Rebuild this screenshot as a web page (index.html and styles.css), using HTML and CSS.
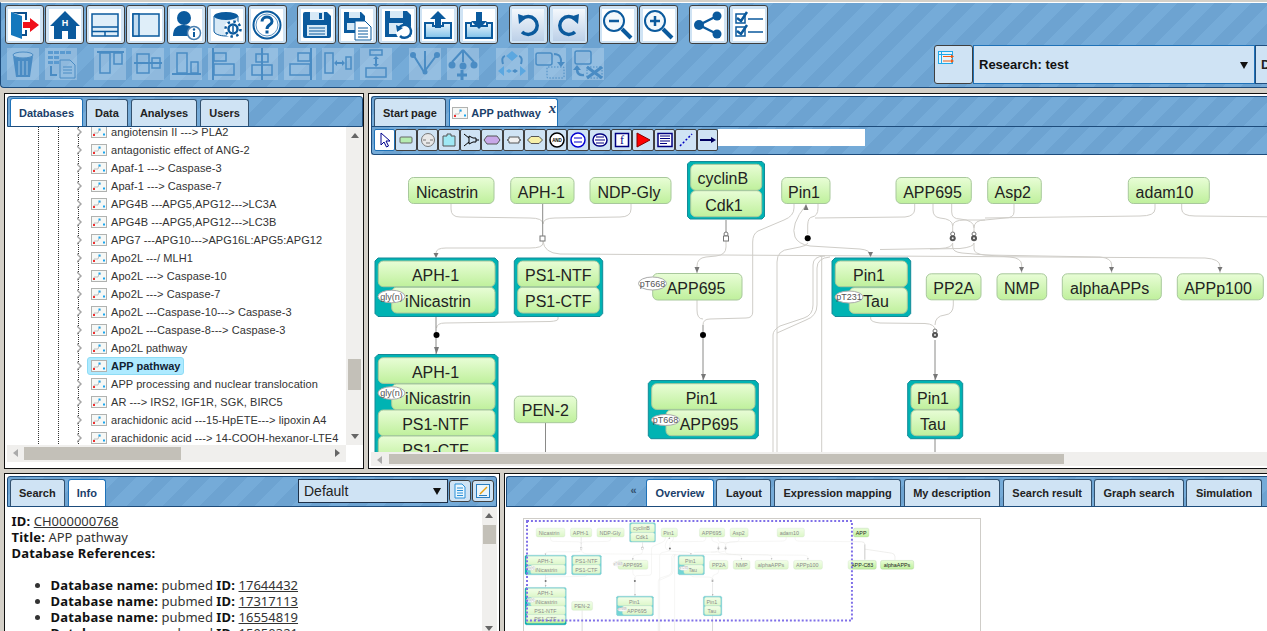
FILE: index.html
```html
<!DOCTYPE html>
<html lang="en">
<head>
<meta charset="utf-8">
<title>APP pathway</title>
<link rel="stylesheet" href="styles.css">
</head>
<body>
<svg class="defs" width="0" height="0" aria-hidden="true">
  <defs>
    <linearGradient id="ng" x1="0" y1="0" x2="0" y2="1"><stop offset="0" stop-color="#e8fdd6"/><stop offset="1" stop-color="#bff09c"/></linearGradient>
    <symbol id="pw" viewBox="0 0 16 12">
      <rect x=".5" y=".5" width="15" height="11" fill="#f6f8f6" stroke="#b0b2b0"/>
      <path d="M3 8 L3 7 H7 L8 4 H10" fill="none" stroke="#aaa" stroke-width=".7"/>
      <rect x="2" y="8" width="2" height="2" fill="#f03030"/>
      <rect x="7.500" y="2.500" width="2" height="2" fill="#19a5ef"/>
      <rect x="12" y="7.500" width="2" height="2" fill="#19a5ef"/>
    </symbol>
    <g id="graph">
      <g class="edge">
        <path d="M451 204V209Q451 217 460 217L530 218Q543 218 543 224"/>
        <path d="M631 204V209Q631 217 620 217L555 218Q543 218 543 224"/>
        <path d="M543 241V243Q543 248 530 248L446 248Q436 248 436 253"/>
        <path d="M543 241Q544 253 560 254L1205 258Q1220 259 1220 266V273"/>
        <path d="M726 241V247Q726 255 716 256L706 257Q697 258 697 266V273"/>
        <path d="M697 300V310Q697 319 703 319"/>
        <path d="M752.700 242V312Q752.700 318 746 318L710 319Q703 319 703 325"/>
        <path d="M558 317V319Q558 321 550 321.500L445 323Q437 323 436.500 328"/>
        <path d="M794 204V208Q794 216 784 220L758 231Q752.700 234 752.700 242"/>
        <path d="M777 500V262Q777 250 790 249L800 247Q806 246 808 243"/>
        <path d="M773 500V335Q773 330 780 326L804 318Q813 315 813 305V265Q813 256 825 256"/>
        <path d="M777 333L806 320Q817 316 817 305V268Q817 258 830 257"/>
        <path d="M821.700 256V500"/>
        <path d="M806 205Q790 225 795 237Q798 244 810 246L860 249Q871 250 871 256"/>
        <path d="M818 204V208Q818 216 812 217Q808 217.500 807.700 225V234"/>
        <path d="M952.700 243Q952 248 940 248.500L880 249.500"/>
        <path d="M974 243Q974 247 960 248.500L930 249"/>
        <path d="M914.700 204V209Q914.700 216 905 217L815 218"/>
        <path d="M933 204V210Q933 217 940 218Q952.700 219 952.700 226V233"/>
        <path d="M951.700 204V212Q951.700 219 960 219Q974 220 974 228V233"/>
        <path d="M1014 204V212Q1014 218 1005 218L985 220Q974 220 974 228"/>
        <path d="M985 220L965 220Q952.700 220 952.700 226"/>
        <path d="M1155 204V209Q1155 216 1140 216L985 218"/>
        <path d="M1181.700 204V209Q1181.700 216 1195 216L1380 218Q1390 218 1390 226V270"/>
        <path d="M952.700 243V247Q952.700 252 962 253L1010 257Q1021.700 258 1021.700 265V273"/>
        <path d="M974 243V249Q974 254 985 255L1100 257Q1111.700 258 1111.700 265V273"/>
        <path d="M870.700 317V319Q871 322 880 323L925 323.500Q935 324 935 330"/>
        <path d="M953.300 300V305Q953.300 314 945 315Q935 316 935 325"/>
        <path d="M1390 240L1470 252Q1480 254 1480 262V272"/>
      </g>
      <g class="edge-d">
        <path d="M542.700 204V236"/>
        <path d="M726 220V235"/>
        <path d="M436 317V354"/>
        <path d="M703 325V380"/>
        <path d="M935 340V380"/>
        <path d="M935 439V520"/>
        <path d="M545.500 423V520"/>
        <path d="M1390 226V272"/>
      </g>
      <g class="arrow">
        <path d="M433.500 253h5l-2.500 5z"/>
        <path d="M694.500 267h5l-2.500 6z"/>
        <path d="M434 347h5l-2.500 7z"/>
        <path d="M701 374h5l-2.500 6z"/>
        <path d="M933 374h5l-2.500 6z"/>
        <path d="M803.500 210h5l-2.500-6z"/>
        <path d="M868 252h5l-2.500 5z"/>
        <path d="M1019 267h5l-2.500 5z"/>
        <path d="M1109 267h5l-2.500 5z"/>
        <path d="M1217.500 267h5l-2.500 5z"/>
      </g>
      <rect class="sq" x="540" y="236" width="5" height="5"/>
      <circle class="sq" cx="726" cy="234" r="2"/>
      <rect class="sq" x="723.500" y="236" width="5" height="5"/>
      <circle class="dot" cx="436.500" cy="335" r="3"/>
      <circle class="dot" cx="703" cy="335" r="3"/>
      <circle class="dot" cx="807.700" cy="238.300" r="3"/>
      <circle class="sq" cx="952.700" cy="234" r="2"/><circle class="gdot" cx="952.700" cy="238.300" r="3"/><circle class="wdot" cx="952.700" cy="238.300" r="1"/>
      <circle class="sq" cx="974" cy="234" r="2"/><circle class="gdot" cx="974" cy="238.300" r="3"/><circle class="wdot" cx="974" cy="238.300" r="1"/>
      <circle class="sq" cx="935" cy="331" r="2"/><circle class="gdot" cx="935" cy="335" r="3"/><circle class="wdot" cx="935" cy="335" r="1"/>

      <rect class="node" x="408.500" y="177.500" width="85.500" height="26" rx="5"/><text class="nt" x="447" y="197.500">Nicastrin</text>
      <rect class="node" x="510.700" y="177.500" width="63.300" height="26" rx="5"/><text class="nt" x="541.300" y="197.500">APH-1</text>
      <rect class="node" x="590" y="177.500" width="81" height="26" rx="5"/><text class="nt" x="629" y="197.500">NDP-Gly</text>
      <rect class="node" x="781.700" y="177.500" width="48.300" height="26" rx="5"/><text class="nt" x="804" y="197.500">Pin1</text>
      <rect class="node" x="896" y="177.500" width="75.300" height="26" rx="5"/><text class="nt" x="932.500" y="197.500">APP695</text>
      <rect class="node" x="987.700" y="177.500" width="53.600" height="26" rx="5"/><text class="nt" x="1012.700" y="197.500">Asp2</text>
      <rect class="node" x="1128.300" y="177.500" width="81" height="26" rx="5"/><text class="nt" x="1164.500" y="197.500">adam10</text>

      <rect class="node" x="926.300" y="273.800" width="54.700" height="26" rx="5"/><text class="nt" x="953.700" y="294">PP2A</text>
      <rect class="node" x="997" y="273.800" width="49.700" height="26" rx="5"/><text class="nt" x="1021.800" y="294">NMP</text>
      <rect class="node" x="1062.300" y="273.800" width="99" height="26" rx="5"/><text class="nt" x="1109.700" y="294">alphaAPPs</text>
      <rect class="node" x="1177.300" y="273.800" width="86" height="26" rx="5"/><text class="nt" x="1218" y="294">APPp100</text>

      <rect class="node" x="652.700" y="273.500" width="89.300" height="26.500" rx="5"/><text class="nt" x="696" y="294">APP695</text>
      <ellipse class="mod" cx="652.500" cy="283.500" rx="14" ry="6.500"/><text class="mt" x="652.500" y="286.500">pT668</text>

      <rect class="node" x="514.300" y="396.200" width="62.400" height="26.500" rx="5"/><text class="nt" x="545.300" y="416">PEN-2</text>

      <path class="cx" d="M690 161.500H762L764.500 164V216.500L762 219H690L687.500 216.500V164Z"/>
      <rect class="node" x="690.700" y="164.300" width="71" height="26" rx="5"/><text class="nt" x="722.800" y="184">cyclinB</text>
      <rect class="node" x="690.700" y="190.700" width="71" height="26" rx="5"/><text class="nt" x="724" y="210.500">Cdk1</text>

      <path class="cx" d="M378 258H495L498 261V313.500L495 316.500H378L375 313.500V261Z"/>
      <rect class="node" x="378.300" y="261" width="116.700" height="25.700" rx="5"/><text class="nt" x="435.500" y="281">APH-1</text>
      <rect class="node" x="391.700" y="287.300" width="103.300" height="25.700" rx="5"/><text class="nt" x="438" y="307">iNicastrin</text>
      <ellipse class="mod" cx="391.500" cy="296.500" rx="13.500" ry="6.300"/><text class="mt" x="391.500" y="299.500">gly(n)</text>

      <path class="cx" d="M517 258H600L602.700 261V313.500L600 316.500H517L514.300 313.500V261Z"/>
      <rect class="node" x="517.700" y="261" width="81.600" height="25.700" rx="5"/><text class="nt" x="558.300" y="281">PS1-NTF</text>
      <rect class="node" x="517.700" y="287.300" width="81.600" height="25.700" rx="5"/><text class="nt" x="558.300" y="307">PS1-CTF</text>

      <path class="cx" d="M835 258H908L910.700 261V313.500L908 316.500H835L832 313.500V261Z"/>
      <rect class="node" x="835.300" y="261" width="72" height="25.700" rx="5"/><text class="nt" x="869" y="281">Pin1</text>
      <rect class="node" x="849.300" y="287.700" width="58" height="25.700" rx="5"/><text class="nt" x="876" y="307">Tau</text>
      <ellipse class="mod" cx="849" cy="297" rx="14" ry="6"/><text class="mt" x="849" y="300">pT231</text>

      <path class="cx" d="M378 354.500H495L498 357.500V463L495 466H378L375 463V357.500Z"/>
      <rect class="node" x="378.300" y="357.700" width="116.700" height="25.700" rx="5"/><text class="nt" x="435.500" y="377.500">APH-1</text>
      <rect class="node" x="391.700" y="384" width="103.300" height="25.700" rx="5"/><text class="nt" x="438" y="403.500">iNicastrin</text>
      <ellipse class="mod" cx="391.500" cy="393" rx="13.500" ry="6.300"/><text class="mt" x="391.500" y="396">gly(n)</text>
      <rect class="node" x="378.300" y="410" width="116.700" height="25.700" rx="5"/><text class="nt" x="435.500" y="429.500">PS1-NTF</text>
      <rect class="node" x="378.300" y="436" width="116.700" height="25.700" rx="5"/><text class="nt" x="435.500" y="456">PS1-CTF</text>

      <path class="cx" d="M651 380.500H755.500L758.300 383.500V436L755.500 438.700H651L648.300 436V383.500Z"/>
      <rect class="node" x="651.700" y="383.700" width="103.300" height="25.700" rx="5"/><text class="nt" x="701.700" y="403.500">Pin1</text>
      <rect class="node" x="666" y="410" width="89" height="25.700" rx="5"/><text class="nt" x="709" y="429.500">APP695</text>
      <ellipse class="mod" cx="665.500" cy="420" rx="14" ry="5.500"/><text class="mt" x="665.500" y="423">pT668</text>

      <path class="cx" d="M910.500 380.500H960L962.700 383.500V436L960 438.700H910.500L907.700 436V383.500Z"/>
      <rect class="node" x="911" y="383.700" width="48.300" height="25.700" rx="5"/><text class="nt" x="933" y="403.500">Pin1</text>
      <rect class="node" x="911" y="410" width="48.300" height="25.700" rx="5"/><text class="nt" x="933" y="429.500">Tau</text>

      <rect class="node" x="1356" y="177.500" width="46" height="26" rx="5"/><text class="nt" x="1379" y="197.500">APP</text>
      <rect class="node" x="1340" y="273.800" width="84" height="26" rx="5"/><text class="nt" x="1382" y="294">APP-C83</text>
      <rect class="node" x="1437" y="273.800" width="99" height="26" rx="5"/><text class="nt" x="1486" y="294">alphaAPPs</text>
    </g>
  </defs>
</svg>

<div class="app">
  <header class="toolbar">
    <div class="tool-left">
      <div class="tool-row">
        <div class="group">
          <button class="tb"><svg viewBox="0 0 32 32"><path fill="#1578bd" d="M3 3 14 7V30L3 26Z"/><path fill="#0b4f8c" d="M3 3H19V11H17V5H10ZM17 21H19V27H14V25H17Z"/><path fill="#f0101a" d="M15 13H22V9L31 16 22 23V19H15Z"/></svg></button>
          <button class="tb"><svg viewBox="0 0 32 32"><path fill="#0b5a9d" d="M16 2 31 17H27V30H19V22H13V30H5V17H1Z"/><path fill="#fff" d="M13 23H19V30H13Z" opacity=".85"/><text class="hh" x="16" y="17">H</text></svg></button>
          <button class="tb"><svg viewBox="0 0 32 32"><rect x="3" y="5" width="26" height="22" fill="#dfeef9" stroke="#0b5a9d" stroke-width="1.500"/><path stroke="#0b5a9d" stroke-width="1.500" d="M3 18H29M3 22.500H29M16 22.500V27"/></svg></button>
          <button class="tb"><svg viewBox="0 0 32 32"><rect x="3" y="5" width="26" height="22" fill="#dfeef9" stroke="#0b5a9d" stroke-width="1.500"/><rect x="3" y="5" width="6" height="22" fill="#c3dcf0" stroke="#0b5a9d" stroke-width="1.500"/></svg></button>
          <button class="tb"><svg viewBox="0 0 32 32"><circle cx="14" cy="9" r="7" fill="#0b5a9d"/><path fill="#0b5a9d" d="M3 27C3 18 8 16 14 16S24 19 24 27Z"/><circle cx="24" cy="24" r="6.500" fill="#fff" stroke="#4a7fb0" stroke-width="1.500"/><path stroke="#0b5a9d" stroke-width="2" d="M24 23V28"/><circle cx="24" cy="20.500" r="1.200" fill="#0b5a9d"/></svg></button>
          <button class="tb"><svg viewBox="0 0 32 32"><path fill="#d7e9f6" stroke="#0b5a9d" d="M3 7V22C3 25 9 27 15 27 21 27 27 25 27 22V7Z"/><ellipse cx="15" cy="7" rx="12" ry="4" fill="#0b5a9d"/><circle cx="22" cy="20" r="9" fill="#fff"/><circle cx="22" cy="20" r="4.500" fill="#fff" stroke="#0b5a9d" stroke-width="2.500"/><circle cx="22" cy="20" r="7.500" fill="none" stroke="#0b5a9d" stroke-width="2.500" stroke-dasharray="2.500 3.400"/><path stroke="#0b5a9d" stroke-width="1.500" d="M22 17V23"/></svg></button>
          <button class="tb"><svg viewBox="0 0 32 32"><circle cx="16" cy="16" r="13.500" fill="#fff" stroke="#0b5a9d" stroke-width="2"/><circle cx="16" cy="16" r="11" fill="none" stroke="#5b93c3"/><path fill="none" stroke="#0b5a9d" stroke-width="3" d="M11 12.500C11 6.500 21 6.500 21 12.500 21 16 16 15.500 16 20"/><rect x="14.500" y="21.500" width="3" height="3" fill="#0b5a9d"/></svg></button>
        </div>
        <div class="group">
          <button class="tb"><svg viewBox="0 0 32 32"><path fill="#0b5a9d" d="M4 3H26L30 7V27Q30 29 28 29H4Q2 29 2 27V5Q2 3 4 3Z"/><rect x="9" y="3" width="14" height="8" fill="#d7e9f6"/><rect x="18" y="4" width="3" height="6" fill="#0b5a9d"/><rect x="6" y="16" width="20" height="11" fill="#d7e9f6"/><path stroke="#0b5a9d" d="M8 19H24M8 22H24M8 25H24"/></svg></button>
          <button class="tb"><svg viewBox="0 0 32 32"><path fill="#0b5a9d" d="M3 3H20L24 7V24H3Z"/><rect x="8" y="3" width="11" height="6" fill="#d7e9f6"/><rect x="6" y="14" width="12" height="7" fill="#d7e9f6"/><path fill="#fff" stroke="#0b5a9d" d="M14 12H24L30 18V31H14Z"/><path stroke="#0b5a9d" d="M17 19H27M17 22H27M17 25H27M17 28H27"/></svg></button>
          <button class="tb"><svg viewBox="0 0 32 32"><path fill="#0b5a9d" d="M3 2H25L29 6V28H3Z"/><rect x="8" y="2" width="13" height="7" fill="#d7e9f6"/><rect x="7" y="14" width="14" height="11" fill="#d7e9f6"/><circle cx="22" cy="23" r="8" fill="#fff"/><path fill="none" stroke="#0b5a9d" stroke-width="2.500" d="M17 19A6.500 6.500 0 1 1 18 27"/><path fill="#0b5a9d" d="M14 16 21 19 15 23Z"/></svg></button>
          <button class="tb"><svg viewBox="0 0 32 32"><defs><linearGradient id="bx" x1="0" y1="0" x2="0" y2="1"><stop offset="0" stop-color="#eaf5fc"/><stop offset="1" stop-color="#7fc2ea"/></linearGradient></defs><path fill="url(#bx)" stroke="#0b5a9d" stroke-width="2" d="M3 14V29H29V14H21V17H11V14Z"/><path fill="#0b5a9d" d="M16 2 24 10H19V19H13V10H8Z"/></svg></button>
          <button class="tb"><svg viewBox="0 0 32 32"><path fill="url(#bx)" stroke="#0b5a9d" stroke-width="2" d="M3 14V29H29V14H24V17H8V14Z"/><path fill="#0b5a9d" d="M16 20 24 12H19V3H13V12H8Z"/></svg></button>
        </div>
        <div class="group">
          <button class="tb soft"><svg viewBox="0 0 32 32"><path fill="none" stroke="#0b5a9d" stroke-width="3.500" d="M10 10A9 9 0 1 1 10 23"/><path fill="#0b5a9d" d="M6 5 15 8 7 15Z"/></svg></button>
          <button class="tb soft"><svg viewBox="0 0 32 32"><path fill="none" stroke="#0b5a9d" stroke-width="3.500" d="M22 10A9 9 0 1 0 22 23"/><path fill="#0b5a9d" d="M26 5 17 8 25 15Z"/></svg></button>
        </div>
        <div class="group">
          <button class="tb"><svg viewBox="0 0 32 32"><circle cx="12" cy="12" r="10" fill="#f2f8fc" stroke="#0b5a9d" stroke-width="2"/><path stroke="#0b5a9d" stroke-width="2.500" d="M7 12H17"/><path stroke="#0b5a9d" stroke-width="4" d="M20 20 29 29"/></svg></button>
          <button class="tb"><svg viewBox="0 0 32 32"><circle cx="12" cy="12" r="10" fill="#f2f8fc" stroke="#0b5a9d" stroke-width="2"/><path stroke="#0b5a9d" stroke-width="2.500" d="M7 12H17M12 7V17"/><path stroke="#0b5a9d" stroke-width="4" d="M20 20 29 29"/></svg></button>
        </div>
        <div class="group">
          <button class="tb"><svg viewBox="0 0 32 32"><path stroke="#0b5a9d" stroke-width="2.500" d="M7 16 25 7M7 16 25 25"/><circle cx="7" cy="16" r="5" fill="#0b5a9d"/><circle cx="25" cy="7" r="4.500" fill="#0b5a9d"/><circle cx="25" cy="25" r="4.500" fill="#0b5a9d"/></svg></button>
          <button class="tb"><svg viewBox="0 0 32 32"><rect x="3" y="5" width="9" height="9" fill="#fff" stroke="#0b5a9d" stroke-width="1.500"/><rect x="3" y="18" width="9" height="9" fill="#fff" stroke="#0b5a9d" stroke-width="1.500"/><path fill="none" stroke="#0b5a9d" stroke-width="2.500" d="M4 9 8 12 14 3M4 22 8 25 14 16"/><path stroke="#0b5a9d" stroke-width="1.500" d="M15 10H30M15 23H30"/></svg></button>
        </div>
      </div>
      <div class="tool-row faded">
        <div class="fgroup">
          <span class="ft"><svg viewBox="0 0 32 32"><ellipse cx="16" cy="7" rx="10" ry="3" fill="#9bc2e2" stroke="#4a8cc4"/><path fill="#4a8cc4" d="M6 8 9 29H23L26 8 C22 11 10 11 6 8Z"/><path stroke="#9bc2e2" d="M12 13V27M16 13V27M20 13V27"/></svg></span>
          <span class="ft"><svg viewBox="0 0 32 32"><path fill="#5a9ad0" d="M3 3h5v3H3zM9 3h5v3H9zM15 3h5v3h-5zM21 3h5v3h-5zM3 8h5v3H3zM9 8h5v3H9zM3 13h5v3H3zM9 13h5v3H9z"/><path fill="none" stroke="#4a8cc4" d="M15 12H25L30 17V30H15Z"/><path stroke="#4a8cc4" d="M18 19H27M18 22H27M18 25H27"/><path fill="none" stroke="#4a8cc4" stroke-width="2" d="M6 18V27H12"/></svg></span>
        </div>
        <div class="fgroup">
          <span class="ft"><svg viewBox="0 0 32 32"><path stroke="#4a8cc4" stroke-width="2" d="M3 4H30"/><rect x="6" y="5" width="10" height="20" fill="none" stroke="#4a8cc4" stroke-width="1.500"/><rect x="20" y="5" width="8" height="11" fill="none" stroke="#4a8cc4" stroke-width="1.500"/></svg></span>
          <span class="ft"><svg viewBox="0 0 32 32"><path stroke="#4a8cc4" stroke-width="2" d="M2 15H30"/><rect x="5" y="6" width="12" height="19" fill="none" stroke="#4a8cc4" stroke-width="1.500"/><rect x="20" y="10" width="8" height="10" fill="none" stroke="#4a8cc4" stroke-width="1.500"/></svg></span>
          <span class="ft"><svg viewBox="0 0 32 32"><path stroke="#4a8cc4" stroke-width="2" d="M2 26H31"/><rect x="7" y="5" width="10" height="20" fill="none" stroke="#4a8cc4" stroke-width="1.500"/><rect x="21" y="14" width="7" height="11" fill="none" stroke="#4a8cc4" stroke-width="1.500"/></svg></span>
          <span class="ft"><svg viewBox="0 0 32 32"><path stroke="#4a8cc4" stroke-width="2" d="M5 0V32"/><rect x="6" y="5" width="12" height="8" fill="none" stroke="#4a8cc4" stroke-width="1.500"/><rect x="6" y="16" width="20" height="11" fill="none" stroke="#4a8cc4" stroke-width="1.500"/></svg></span>
          <span class="ft"><svg viewBox="0 0 32 32"><path stroke="#4a8cc4" stroke-width="2" d="M16 0V32"/><rect x="10" y="6" width="12" height="8" fill="none" stroke="#4a8cc4" stroke-width="1.500"/><rect x="6" y="17" width="20" height="10" fill="none" stroke="#4a8cc4" stroke-width="1.500"/></svg></span>
          <span class="ft"><svg viewBox="0 0 32 32"><path stroke="#4a8cc4" stroke-width="2" d="M27 0V32"/><rect x="14" y="5" width="12" height="8" fill="none" stroke="#4a8cc4" stroke-width="1.500"/><rect x="6" y="16" width="20" height="11" fill="none" stroke="#4a8cc4" stroke-width="1.500"/></svg></span>
          <span class="ft"><svg viewBox="0 0 32 32"><rect x="3" y="5" width="8" height="20" fill="none" stroke="#4a8cc4" stroke-width="1.500"/><rect x="24" y="9" width="5" height="12" fill="none" stroke="#4a8cc4" stroke-width="1.500"/><path stroke="#4a8cc4" stroke-width="2" d="M14 15H21"/><path fill="#4a8cc4" d="M12 15 15 12V18ZM23 15 20 12V18Z"/></svg></span>
          <span class="ft"><svg viewBox="0 0 32 32"><rect x="10" y="2" width="12" height="5" fill="none" stroke="#4a8cc4" stroke-width="1.500"/><rect x="6" y="20" width="20" height="9" fill="none" stroke="#4a8cc4" stroke-width="1.500"/><path stroke="#4a8cc4" stroke-width="2" d="M16 10V17"/><path fill="#4a8cc4" d="M16 8 19 11H13ZM16 19 19 16H13Z"/></svg></span>
        </div>
        <div class="fgroup">
          <span class="ft"><svg viewBox="0 0 32 32"><path stroke="#4a8cc4" stroke-width="2" d="M5 8 15 24M16 3V24M27 8 15 24"/><circle cx="4" cy="7" r="3" fill="#4a8cc4"/><circle cx="28" cy="7" r="3" fill="#4a8cc4"/><circle cx="16" cy="24" r="2.500" fill="#4a8cc4"/></svg></span>
          <span class="ft"><svg viewBox="0 0 32 32"><path stroke="#4a8cc4" stroke-width="2" fill="none" d="M16 2 5 14M16 2V14M16 2 27 14"/><circle cx="5" cy="17" r="3.500" fill="#4a8cc4"/><circle cx="16" cy="18" r="3.500" fill="#4a8cc4"/><circle cx="27" cy="17" r="3.500" fill="#4a8cc4"/><path stroke="#4a8cc4" stroke-width="3" d="M10 27H20M15 22V32"/></svg></span>
        </div>
        <div class="fgroup">
          <span class="ft"><svg viewBox="0 0 32 32"><path fill="#5ba7e0" d="M16 3 22 8 16 13 10 8ZM8 18V28L2 23ZM24 18V28L30 23ZM10 23 13 21 16 23 13 25Z"/><path fill="#4a8cc4" d="M19 21 22 23 19 25 16 23Z"/><path fill="none" stroke="#4a8cc4" stroke-width="2" d="M7 16Q5 9 9 8M25 16Q27 9 23 8"/></svg></span>
          <span class="ft"><svg viewBox="0 0 32 32"><rect x="2" y="5" width="16" height="12" rx="2" fill="none" stroke="#4a8cc4" stroke-width="1.500"/><rect x="13" y="19" width="17" height="11" rx="1" fill="none" stroke="#4a8cc4" stroke-dasharray="1.500 1.500"/><path fill="none" stroke="#4a8cc4" stroke-width="2" d="M20 6Q28 6 27 15"/><path fill="#4a8cc4" d="M23 14H31L27 19Z"/></svg></span>
          <span class="ft"><svg viewBox="0 0 32 32"><rect x="3" y="3" width="16" height="13" rx="2" fill="none" stroke="#4a8cc4" stroke-width="1.500"/><path fill="none" stroke="#4a8cc4" stroke-width="2.500" d="M5 21Q5 28 12 27"/><path fill="#4a8cc4" d="M1 22H9L5 17Z"/><rect x="15" y="19" width="15" height="11" fill="none" stroke="#4a8cc4" stroke-dasharray="1.500 1.500"/><path stroke="#4a8cc4" stroke-width="3" d="M15 19 30 30M30 19 15 30"/></svg></span>
        </div>
      </div>
    </div>
    <div class="tool-right">
      <button class="tb2"><svg viewBox="0 0 16 14" class="listic"><rect x=".5" y=".5" width="14" height="12" fill="#e6f5fb" stroke="#1fa8ea"/><path stroke="#1fa8ea" d="M3.500 1V13M1 3.500H14"/><path stroke="#f05a14" d="M5 5.500H13M5 10H13"/><path fill="#f05a14" d="M16 5.500 13 3.500V7.500ZM16 10 13 8V12Z"/></svg></button>
      <div class="combo research"><span>Research: test</span><i class="caret"></i></div>
      <div class="combo second"><span>Default</span></div>
    </div>
  </header>

  <main class="upper">
    <section class="panel left">
      <div class="bar">
        <nav class="tabs">
          <a class="tab on">Databases</a><a class="tab">Data</a><a class="tab">Analyses</a><a class="tab">Users</a>
        </nav>
      </div>
      <div class="tree-wrap">
        <div class="tree">
          <ul class="rows">
            <li class="row"><i class="tri"></i><svg class="pw"><use href="#pw"/></svg><span>angiotensin II ---&gt; PLA2</span></li>
            <li class="row"><i class="tri"></i><svg class="pw"><use href="#pw"/></svg><span>antagonistic effect of ANG-2</span></li>
            <li class="row"><i class="tri"></i><svg class="pw"><use href="#pw"/></svg><span>Apaf-1 ---&gt; Caspase-3</span></li>
            <li class="row"><i class="tri"></i><svg class="pw"><use href="#pw"/></svg><span>Apaf-1 ---&gt; Caspase-7</span></li>
            <li class="row"><i class="tri"></i><svg class="pw"><use href="#pw"/></svg><span>APG4B ---APG5,APG12---&gt;LC3A</span></li>
            <li class="row"><i class="tri"></i><svg class="pw"><use href="#pw"/></svg><span>APG4B ---APG5,APG12---&gt;LC3B</span></li>
            <li class="row"><i class="tri"></i><svg class="pw"><use href="#pw"/></svg><span>APG7 ---APG10---&gt;APG16L:APG5:APG12</span></li>
            <li class="row"><i class="tri"></i><svg class="pw"><use href="#pw"/></svg><span>Apo2L ---/ MLH1</span></li>
            <li class="row"><i class="tri"></i><svg class="pw"><use href="#pw"/></svg><span>Apo2L ---&gt; Caspase-10</span></li>
            <li class="row"><i class="tri"></i><svg class="pw"><use href="#pw"/></svg><span>Apo2L ---&gt; Caspase-7</span></li>
            <li class="row"><i class="tri"></i><svg class="pw"><use href="#pw"/></svg><span>Apo2L ---Caspase-10---&gt; Caspase-3</span></li>
            <li class="row"><i class="tri"></i><svg class="pw"><use href="#pw"/></svg><span>Apo2L ---Caspase-8---&gt; Caspase-3</span></li>
            <li class="row"><i class="tri"></i><svg class="pw"><use href="#pw"/></svg><span>Apo2L pathway</span></li>
            <li class="row sel"><i class="tri"></i><div class="pick"><svg class="pw"><use href="#pw"/></svg><span>APP pathway</span></div></li>
            <li class="row"><i class="tri"></i><svg class="pw"><use href="#pw"/></svg><span>APP processing and nuclear translocation</span></li>
            <li class="row"><i class="tri"></i><svg class="pw"><use href="#pw"/></svg><span>AR ---&gt; IRS2, IGF1R, SGK, BIRC5</span></li>
            <li class="row"><i class="tri"></i><svg class="pw"><use href="#pw"/></svg><span>arachidonic acid ---15-HpETE---&gt; lipoxin A4</span></li>
            <li class="row"><i class="tri"></i><svg class="pw"><use href="#pw"/></svg><span>arachidonic acid ---&gt; 14-COOH-hexanor-LTE4</span></li>
          </ul>
        </div>
        <div class="vs tree-vs"><i class="up"></i><b class="thumb tree-thumb"></b><i class="down"></i></div>
        <div class="hs tree-hs"><i class="lf"></i><b class="hthumb tree-hthumb"></b><i class="rt"></i></div>
      </div>
    </section>

    <section class="panel main">
      <div class="bar">
        <nav class="tabs">
          <a class="tab">Start page</a>
          <a class="tab on doc"><svg class="pw"><use href="#pw"/></svg>APP pathway<em class="close">x</em></a>
        </nav>
      </div>
      <div class="palette">
        <button class="pb act"><svg viewBox="0 0 16 16"><path fill="#fff" stroke="#00008c" d="M4 1V13L7 10 9.500 15 11.500 14 9 9H13Z"/></svg></button>
        <button class="pb"><svg viewBox="0 0 16 16"><rect x="2" y="5" width="12" height="6" rx="1" fill="#b5ecb0" stroke="#666"/></svg></button>
        <button class="pb"><svg viewBox="0 0 16 16"><circle cx="8" cy="8" r="6.500" fill="#e8e8e8" stroke="#777"/><path stroke="#777" d="M3 8H6M10 8H13M6 11H10"/></svg></button>
        <button class="pb"><svg viewBox="0 0 16 16"><path fill="#9fe9f5" stroke="#555" d="M2 4H6V2H10V4H14V14H2Z"/></svg></button>
        <button class="pb"><svg viewBox="0 0 16 16"><path fill="none" stroke="#000" d="M1 2 6 6M1 14 6 10M6 4V12L10 10H13V6H10L6 4M13 8H16"/></svg></button>
        <button class="pb"><svg viewBox="0 0 16 16"><path fill="#c8a8e8" stroke="#555" d="M3 4H13L16 8 13 12H3L0 8Z"/></svg></button>
        <button class="pb"><svg viewBox="0 0 16 16"><path fill="#f0f0f0" stroke="#555" d="M3 5H13V7L15 8 13 9V11H3V9L1 8 3 7Z"/></svg></button>
        <button class="pb"><svg viewBox="0 0 16 16"><path fill="#f7f0a8" stroke="#555" d="M4 4.500H12L15.500 8 12 11.500H4L.5 8Z"/></svg></button>
        <button class="pb"><svg viewBox="0 0 16 16"><circle cx="8" cy="8" r="7" fill="#fff" stroke="#000" stroke-width="1.500"/><text class="andt" x="8" y="10">AND</text></svg></button>
        <button class="pb"><svg viewBox="0 0 16 16"><circle cx="8" cy="8" r="7" fill="#fff" stroke="#0000d0" stroke-width="1.500"/><path stroke="#0000d0" d="M4 6H12M4 10H12"/></svg></button>
        <button class="pb"><svg viewBox="0 0 16 16"><rect x="1" y="2" width="14" height="12" rx="6" fill="#fff" stroke="#000080" stroke-width="1.500"/><path stroke="#000080" d="M4 5H12M3 8H13M4 11H12"/></svg></button>
        <button class="pb"><svg viewBox="0 0 16 16"><rect x="1.500" y="1.500" width="13" height="13" fill="#fff" stroke="#000080" stroke-width="1.500"/><text class="ft-f" x="8" y="12">f</text></svg></button>
        <button class="pb"><svg viewBox="0 0 16 16"><path fill="#f00" stroke="#800" d="M2 1V15L15 8Z"/></svg></button>
        <button class="pb"><svg viewBox="0 0 16 16"><rect x="1" y="1.500" width="14" height="13" fill="#fff" stroke="#000080" stroke-width="1.500"/><path stroke="#000080" d="M3 4H13M3 6.500H13M3 9H13M3 11.500H10"/></svg></button>
        <button class="pb"><svg viewBox="0 0 16 16"><path stroke="#0000c0" stroke-width="1.500" stroke-dasharray="2 2" d="M2 14 14 2"/></svg></button>
        <button class="pb"><svg viewBox="0 0 16 16"><path stroke="#000060" stroke-width="2" d="M0 8H12"/><path fill="#000060" d="M16 8 11 5V11Z"/></svg></button>
        <input class="pal-input" type="text" aria-label="Search">
      </div>
      <div class="canvas">
        <svg class="graph-view" viewBox="371 157 1000 295" width="1000" height="295" preserveAspectRatio="xMinYMin"><use href="#graph"/></svg>
      </div>
      <div class="hs main-hs"><i class="lf"></i><b class="hthumb main-hthumb"></b></div>
    </section>
  </main>

  <div class="lower">
    <section class="panel info">
      <div class="bar">
        <nav class="tabs"><a class="tab">Search</a><a class="tab on">Info</a></nav>
        <div class="info-tools">
          <div class="combo default"><span>Default</span><i class="caret"></i></div>
          <button class="mini"><svg viewBox="0 0 16 16"><path fill="#eaf6fd" stroke="#2a90d8" d="M3 1H10L13 4V15H3Z"/><path stroke="#2a90d8" d="M5 5H11M5 7.500H11M5 10H11M5 12.500H11"/></svg></button>
          <button class="mini"><svg viewBox="0 0 16 16"><rect x="1.500" y="1.500" width="13" height="13" fill="#eaf6fd" stroke="#2a7ec0"/><path stroke="#e8a010" stroke-width="1.500" d="M5 11 12 4"/><path stroke="#2a7ec0" d="M4 12.500H12"/></svg></button>
        </div>
      </div>
      <div class="info-body">
        <div class="info-text">
          <p><b>ID:</b> <u>CH000000768</u></p>
          <p><b>Title:</b> APP pathway</p>
          <p><b>Database References:</b></p>
          <ul class="refs">
            <li><b>Database name:</b> pubmed <b>ID:</b> <u>17644432</u></li>
            <li><b>Database name:</b> pubmed <b>ID:</b> <u>17317113</u></li>
            <li><b>Database name:</b> pubmed <b>ID:</b> <u>16554819</u></li>
            <li><b>Database name:</b> pubmed <b>ID:</b> <u>15950321</u></li>
          </ul>
        </div>
        <div class="vs info-vs"><i class="up"></i><b class="thumb info-thumb"></b><i class="down"></i></div>
      </div>
    </section>
    <section class="panel over">
      <div class="bar">
        <nav class="tabs right-tabs">
          <span class="collapse">«</span>
          <a class="tab on">Overview</a><a class="tab">Layout</a><a class="tab">Expression mapping</a><a class="tab">My description</a><a class="tab">Search result</a><a class="tab">Graph search</a><a class="tab">Simulation</a>
        </nav>
      </div>
      <div class="over-body">
        <svg class="minimap" viewBox="0 0 458 130" width="458" height="130">
          <g transform="translate(-129 -51) scale(.34)"><use href="#graph"/></g>
          <rect class="veil" x=".5" y="2" width="330" height="101"/>
          <rect class="view" x=".5" y="2" width="330" height="101"/>
        </svg>
      </div>
    </section>
  </div>
</div>
</body>
</html>
```
FILE: styles.css
```css
* { box-sizing: border-box; }
html, body { margin: 0; padding: 0; height: 100%; overflow: hidden; }
body { background: #d4d0c8; font-family: "Liberation Sans", Arial, sans-serif; color: #222; }
.defs { position: absolute; }
.app { width: 1267px; height: 631px; overflow: hidden; padding-top: 2px; }

.toolbar, .bar, .palette {
  background: repeating-linear-gradient(135deg, #6da3d1 0 13px, #75abd8 13px 26px);
}
.toolbar {
  height: 86px; display: flex; border: 1px solid #1d4c7c; border-right: 0; border-top-color: #fff;
  border-radius: 0 0 0 4px; padding: 2px 0 0 3.500px; margin-bottom: 5px; overflow: hidden;
}
.tool-left { width: 929.500px; flex: none; display: flex; flex-direction: column; gap: 4px; }
.tool-row { display: flex; gap: 10.500px; }
.group { display: flex; gap: 1.500px; }
.tb {
  width: 39px; height: 39px; padding: 2.500px; border: 1px solid #3f3f3f; border-radius: 3px; background: #cfe3f4; display: block;
}
.tb svg { display: block; width: 32px; height: 32px; background: #fff; }
.tb.soft svg { background: linear-gradient(#f4f8fc, #bcd0e8); }
.tool-row.faded { gap: 17px; padding-left: 2.500px; }
.fgroup { display: flex; gap: 6px; }
.ft { width: 32px; height: 32px; background: rgba(205, 226, 244, .35); display: block; }
.ft svg { display: block; width: 32px; height: 32px; }
.hh { font: bold 9px "Liberation Sans", sans-serif; fill: #fff; text-anchor: middle; }

.tool-right { display: flex; align-self: flex-end; flex: none; margin-bottom: 3px; }
.tb2 { width: 39px; height: 39px; padding: 5px 3px; border: 1px solid #3f3f3f; border-radius: 3px; background: #cfe3f4; display: flex; align-items: flex-start; }
.listic { display: block; width: 16px; height: 14px; }
.combo { display: flex; align-items: center; background: #cfe3f4; position: relative; }
.research { width: 282px; height: 39px; border: 1px solid #1f72b8; padding: 0 5px; font: bold 13px "Liberation Sans", sans-serif; color: #111; }
.second { width: 100px; height: 39px; border: 1px solid #1f4f80; padding: 0 5px; font: bold 13px "Liberation Sans", sans-serif; white-space: nowrap; }
.caret { position: absolute; right: 6px; top: 50%; margin-top: -3px; border: 4px solid transparent; border-top: 7px solid #111; border-bottom: 0; }

.upper { display: flex; gap: 4px; height: 376px; padding-left: 4px; margin-bottom: 4px; }
.panel { background: #fff; border: 1px solid #111; padding: 2px; display: flex; flex-direction: column; overflow: hidden; }
.left { width: 360px; flex: none; padding-right: 0; }
.main { width: 920px; flex: none; border-right: 0; padding-right: 0; }

.bar { height: 31px; flex: none; display: flex; align-items: flex-end; border: 1px solid #1d4c7c; padding-left: 2px; border-radius: 3px 3px 0 0; }
.tabs { display: flex; gap: 3px; align-items: flex-end; }
.tab {
  height: 27px; padding: 0 8px; display: flex; align-items: center; font-size: 11px; font-weight: bold;
  background: #cfe3f4; border: 1px solid #33516e; border-bottom: 0; border-radius: 3px 3px 0 0; color: #222; white-space: nowrap;
}
.tab.on { background: #fff; color: #1b3f6b; border-color: #1f72b8; }
.left .tab.on { height: 28px; }

.tree-wrap { flex: 1; min-height: 0; display: grid; grid-template-columns: 339px 17px; grid-template-rows: 318px 17px 1fr; }
.tree {
  overflow: hidden; position: relative;
  background:
    repeating-linear-gradient(#333 0 1px, transparent 1px 2px) 31px 0 / 1px 100% no-repeat,
    repeating-linear-gradient(#333 0 1px, transparent 1px 2px) 51px 0 / 1px 100% no-repeat,
    repeating-linear-gradient(#333 0 1px, transparent 1px 2px) 71px 0 / 1px 100% no-repeat;
}
.rows { list-style: none; margin: -4px 0 0; padding: 0 0 0 70px; width: 339px; }
.row { height: 18px; display: flex; align-items: center; font-size: 11px; letter-spacing: .07px; white-space: nowrap; color: #333; }
.tri { width: 0; height: 0; margin-right: 9px; flex: none; border: 5px solid transparent; border-width: 5px 0 5px 5px; border-left-color: #a5a5a5; position: relative; }
.tri::after { content: ""; position: absolute; left: -5px; top: -3.500px; border: 3.500px solid transparent; border-left: 3.500px solid #fff; border-right: 0; }
.pw { width: 16px; height: 12px; margin-right: 4px; flex: none; }
.pick { display: flex; align-items: center; height: 18px; margin-left: -4px; padding: 0 2px 0 3px; background: #aeeaff; border: 1px solid #8fdcf5; border-radius: 3px; font-weight: bold; color: #123; letter-spacing: 0; }

.vs { background: #f0efed; position: relative; }
.hs { background: #f0efed; position: relative; }
.up, .down, .lf, .rt { position: absolute; width: 0; height: 0; border: 4px solid transparent; }
.up { top: 6px; left: 5px; border-top: 0; border-bottom: 5px solid #666; }
.down { bottom: 6px; left: 5px; border-bottom: 0; border-top: 5px solid #666; }
.lf { left: 6px; top: 4px; border-left: 0; border-right: 5px solid #aaa; }
.rt { right: 6px; top: 4px; border-right: 0; border-left: 5px solid #666; }
.thumb { position: absolute; left: 2px; right: 2px; background: #c3c0b8; }
.hthumb { position: absolute; top: 2px; bottom: 2px; background: #c3c0b8; }
.tree-thumb { top: 232px; height: 31px; }
.tree-hs { grid-row: 2; grid-column: 1; }
.tree-hthumb { left: 17px; width: 157px; }

.main .bar { border-right: 0; padding-left: 1.500px; }
.main .tab { height: 28px; padding: 0 8.500px; }
.main .tab.doc { padding: 0 1px 0 2px; width: 109px; justify-content: flex-start; }
.doc .pw { width: 16px; height: 12px; margin-right: 3px; }
.close { font: italic bold 15px "Liberation Serif", serif; color: #1b3f6b; margin-left: 8px; align-self: flex-start; margin-top: 0; line-height: 18px; }
.palette { height: 28px; flex: none; display: flex; align-items: flex-start; border: 1px solid #1d4c7c; border-top: 0; border-right: 0; padding: 2px 0 0 1.500px; margin-bottom: 2px; border-radius: 0 0 0 3px; }
.pb { width: 21.560px; height: 22px; padding: 2px; border: 1px solid #404040; background: #cfe3f4; border-radius: 2px; flex: none; }
.pb svg { display: block; width: 16px; height: 16px; overflow: visible; }
.pb.act { background: #fff; border-color: #1f72b8; }
.andt { font: bold 4.500px "Liberation Sans", sans-serif; text-anchor: middle; fill: #000; }
.ft-f { font: 12px "Liberation Serif", serif; text-anchor: middle; fill: #000080; }
.pal-input { width: 147px; height: 17px; border: 0; background: #fff; padding: 0; flex: none; }
.canvas { height: 295px; flex: none; overflow: hidden; }
.graph-view { display: block; }
.main-hs { height: 16px; }
.main-hthumb { left: 18px; width: 675px; }

.edge path { fill: none; stroke: #cfcdc8; stroke-width: 1; }
.edge-d path { fill: none; stroke: #8a8a88; stroke-width: 1; }
.arrow path { fill: #777; }
.sq { fill: #fff; stroke: #777; }
.dot { fill: #000; }
.gdot { fill: #555; }
.wdot { fill: #eee; }
.node { fill: url(#ng); stroke: #a8c89c; stroke-width: 1; }
.cx { fill: #00b3b3; stroke: #148a98; stroke-width: 1; }
.nt { font: 16px "Liberation Sans", sans-serif; fill: #222; text-anchor: middle; }
.mod { fill: #fff; stroke: #aaa; }
.mt { font: 9px "Liberation Sans", sans-serif; fill: #555; text-anchor: middle; }

.lower { display: flex; gap: 4px; height: 170px; padding-left: 4px; }
.info { width: 496px; flex: none; }
.info .bar { justify-content: space-between; padding-right: 2px; }
.info .tab { height: 27px; }
.info-tools { display: flex; align-self: flex-start; align-items: flex-start; gap: 1px; margin-top: 2px; }
.default { width: 150px; height: 24px; border: 1px solid #1d3048; padding: 0 5px; font-size: 14px; color: #222; }
.mini { width: 22px; height: 22px; padding: 2px; border: 1px solid #3f3f3f; border-radius: 3px; background: #cfe3f4; margin-top: 1px; }
.mini svg { display: block; width: 16px; height: 16px; }
.info-body { flex: 1; min-height: 0; display: flex; }
.info-text { flex: 1; min-width: 0; padding: 6px 0 0 4.500px; font: 13px/16px "Noto Sans", sans-serif; color: #333; overflow: hidden; }
.info-text b { color: #111; letter-spacing: .2px; }
.info-text p { margin: 0; }
.refs { margin: 16px 0 0; padding-left: 39px; }
.info-vs { width: 15px; flex: none; }
.info-thumb { top: 18px; height: 19px; left: 1px; right: 1px; }
.info-vs .up, .info-vs .down { left: 3px; }
.info-vs .down { top: 119px; bottom: auto; }

.over { width: 790px; flex: none; border-right: 0; padding: 2px 0 2px 1px; }
.over .bar { border-right: 0; padding: 0; }
.right-tabs { gap: 2.500px; }
.over .tab { height: 27px; padding: 0 8.500px; }
.collapse { width: 136.500px; height: 27px; text-align: right; padding: 5px 7px 0 0; font-size: 11px; font-weight: bold; color: #33516e; }
.over-body { flex: 1; min-height: 0; overflow: hidden; padding: 11px 0 0 17px; }
.minimap { display: block; border: 1px solid #cfcdc8; background: #fff; }
.veil { fill: #fff; opacity: .45; }
.view { fill: none; stroke: #7f6fe8; stroke-width: 2; stroke-dasharray: 2 2; }
```
